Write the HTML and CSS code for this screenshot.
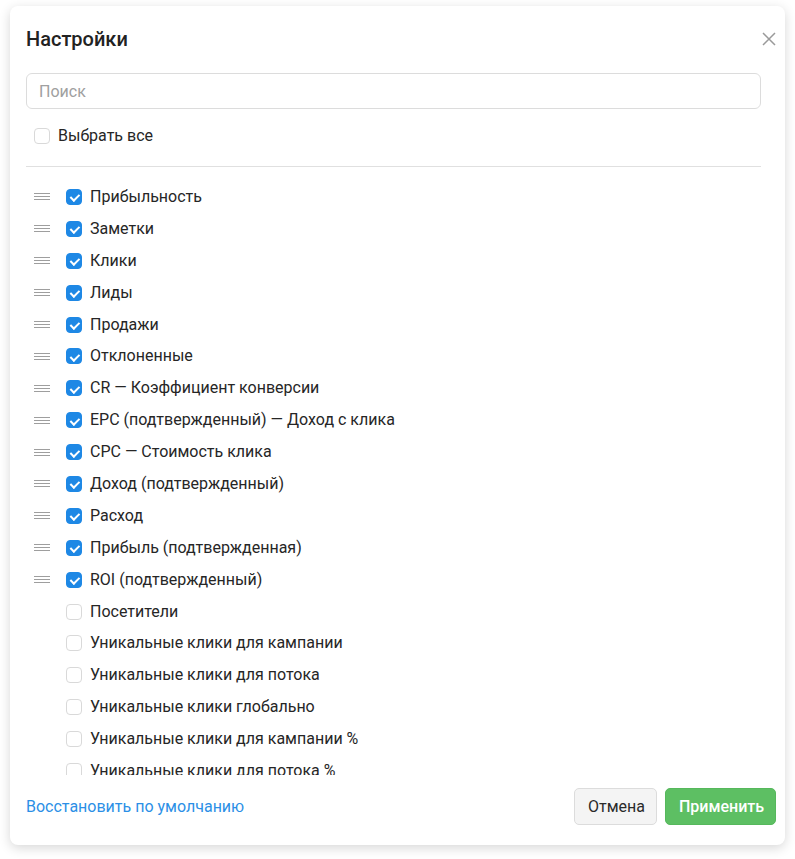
FILE: index.html
```html
<!DOCTYPE html>
<html lang="ru">
<head>
<meta charset="utf-8">
<title>Настройки</title>
<link rel="stylesheet" href="styles.css">
</head>
<body>
<div class="modal">
  <div class="header">
    <h2 class="title">Настройки</h2>
    <button class="close" aria-label="Закрыть">
      <svg width="14" height="14" viewBox="0 0 14 14"><path d="M1 1L13 13M13 1L1 13" stroke="#9a9a9a" stroke-width="1.5" fill="none"/></svg>
    </button>
  </div>
  <div class="body">
    <input class="search" type="text" placeholder="Поиск">
    <label class="select-all"><span class="cb"></span><span>Выбрать все</span></label>
    <div class="divider"></div>
    <div class="list">
      <div class="row"><span class="handle"></span><span class="cb on"></span><span>Прибыльность</span></div>
      <div class="row"><span class="handle"></span><span class="cb on"></span><span>Заметки</span></div>
      <div class="row"><span class="handle"></span><span class="cb on"></span><span>Клики</span></div>
      <div class="row"><span class="handle"></span><span class="cb on"></span><span>Лиды</span></div>
      <div class="row"><span class="handle"></span><span class="cb on"></span><span>Продажи</span></div>
      <div class="row"><span class="handle"></span><span class="cb on"></span><span>Отклоненные</span></div>
      <div class="row"><span class="handle"></span><span class="cb on"></span><span>CR — Коэффициент конверсии</span></div>
      <div class="row"><span class="handle"></span><span class="cb on"></span><span>EPC (подтвержденный) — Доход с клика</span></div>
      <div class="row"><span class="handle"></span><span class="cb on"></span><span>CPC — Стоимость клика</span></div>
      <div class="row"><span class="handle"></span><span class="cb on"></span><span>Доход (подтвержденный)</span></div>
      <div class="row"><span class="handle"></span><span class="cb on"></span><span>Расход</span></div>
      <div class="row"><span class="handle"></span><span class="cb on"></span><span>Прибыль (подтвержденная)</span></div>
      <div class="row"><span class="handle"></span><span class="cb on"></span><span>ROI (подтвержденный)</span></div>
      <div class="row"><span class="handle-space"></span><span class="cb"></span><span>Посетители</span></div>
      <div class="row"><span class="handle-space"></span><span class="cb"></span><span>Уникальные клики для кампании</span></div>
      <div class="row"><span class="handle-space"></span><span class="cb"></span><span>Уникальные клики для потока</span></div>
      <div class="row"><span class="handle-space"></span><span class="cb"></span><span>Уникальные клики глобально</span></div>
      <div class="row"><span class="handle-space"></span><span class="cb"></span><span>Уникальные клики для кампании %</span></div>
      <div class="row"><span class="handle-space"></span><span class="cb"></span><span>Уникальные клики для потока %</span></div>
    </div>
  </div>
  <div class="footer">
    <a class="reset" href="#">Восстановить по умолчанию</a>
    <div class="actions">
      <button class="btn cancel">Отмена</button>
      <button class="btn apply">Применить</button>
    </div>
  </div>
</div>
</body>
</html>
```

FILE: styles.css
```css
* { box-sizing: border-box; }
html, body { margin: 0; background: #fff; }
body {
  padding: 6px 10px 14px 10px;
  font-family: Roboto, "Noto Sans", Arial, sans-serif;
  color: #262626;
  font-size: 16px;
}
.modal {
  width: 775px;
  height: 839px;
  background: #fff;
  border-radius: 8px;
  box-shadow: 0 3px 12px rgba(0, 0, 0, 0.16);
  display: flex;
  flex-direction: column;
  overflow: hidden;
}
.header {
  display: flex;
  align-items: center;
  justify-content: space-between;
  padding: 21px 9px 0 16px;
}
.title {
  margin: 0;
  font-size: 20px;
  line-height: 24px;
  font-weight: 500;
  color: #222;
}
.close {
  border: 0;
  background: none;
  padding: 0;
  width: 14px;
  height: 14px;
  display: flex;
  cursor: pointer;
}
.body {
  padding: 22px 24px 0 16px;
  display: flex;
  flex-direction: column;
  flex: 0 0 auto;
}
.search {
  height: 36px;
  border: 1px solid #dcdcdc;
  border-radius: 6px;
  padding: 0 12px;
  font-family: inherit;
  font-size: 16px;
  color: #222;
  outline: none;
}
.search::placeholder { color: #a0a0a0; }
.select-all {
  display: flex;
  align-items: center;
  gap: 8px;
  padding-left: 8px;
  margin-top: 15px;
  line-height: 24px;
}
.divider {
  height: 1px;
  background: #e0e0e0;
  margin-top: 18px;
}
.list {
  margin-top: 14px;
  height: 594px;
  overflow: hidden;
}
.row {
  display: flex;
  align-items: center;
  height: 31.9px;
  padding-left: 8px;
  line-height: 24px;
}
.handle, .handle-space {
  width: 16px;
  height: 7px;
  margin-right: 16px;
  flex: none;
}
.handle {
  border-top: 1px solid #9e9e9e;
  border-bottom: 1px solid #9e9e9e;
  background: linear-gradient(#fff 0 2px, #9e9e9e 2px 3px, #fff 3px);
}
.cb {
  width: 16px;
  height: 16px;
  border: 1px solid #d9d9d9;
  border-radius: 4px;
  background: #fff;
  flex: none;
  margin-right: 8px;
  position: relative;
}
.select-all .cb { margin-right: 0; }
.cb.on {
  background: #1e88e5;
  border-color: #1e88e5;
}
.cb.on::after {
  content: "";
  position: absolute;
  left: 4.5px;
  top: 2.5px;
  width: 3.5px;
  height: 7px;
  border-right: 2px solid #fff;
  border-bottom: 2px solid #fff;
  transform: rotate(45deg);
}
.footer {
  display: flex;
  align-items: center;
  justify-content: space-between;
  padding: 13px 9px 0 16px;
}
.reset {
  color: #2b8fe6;
  text-decoration: none;
  font-size: 16px;
}
.actions {
  display: flex;
  gap: 8px;
}
.btn {
  height: 37px;
  border-radius: 5px;
  font-family: inherit;
  font-size: 16px;
  padding: 0 13px;
  cursor: pointer;
}
.cancel {
  background: #f4f4f4;
  border: 1px solid #dcdcdc;
  color: #2a2a2a;
  width: 83px;
}
.apply {
  background: #5dbf63;
  border: 1px solid #56b85c;
  color: #fff;
  font-weight: 500;
  width: 111px;
}
```
